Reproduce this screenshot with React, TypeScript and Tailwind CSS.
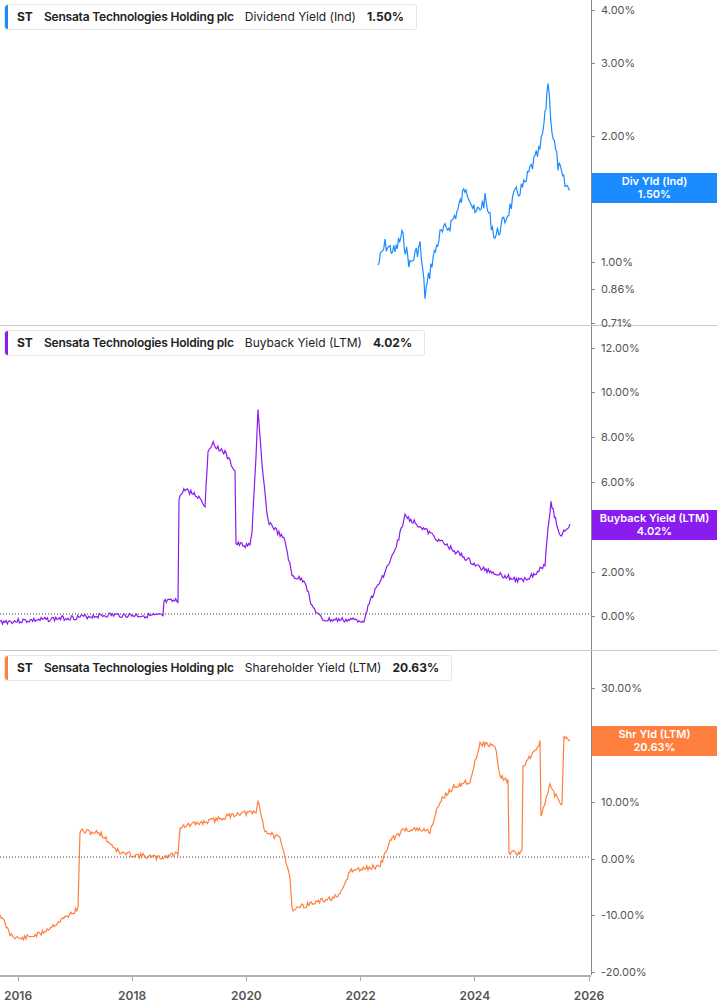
type P = [number, number];

const rnd = (seed: number) => {
  let s = seed;
  return () => {
    s = (s * 9301 + 49297) % 233280;
    return s / 233280;
  };
};

// densify a shape and add jitter
function wiggle(pts: P[], seed: number, amp: number, step = 1.2): string {
  const r = rnd(seed);
  const out: string[] = [];
  for (let i = 0; i < pts.length - 1; i++) {
    const [x1, y1] = pts[i];
    const [x2, y2] = pts[i + 1];
    const n = Math.max(1, Math.round((x2 - x1) / step));
    for (let k = 0; k < n; k++) {
      const t = k / n;
      const y = y1 + (y2 - y1) * t + (r() - 0.5) * amp * 2;
      out.push(`${(x1 + (x2 - x1) * t).toFixed(1)},${y.toFixed(1)}`);
    }
  }
  const last = pts[pts.length - 1];
  out.push(`${last[0]},${last[1]}`);
  return out.join(" ");
}

const divPts: P[] = [
  [378, 265], [385, 245], [395, 252], [402, 235], [410, 265], [420, 245], [425, 295],
  [432, 262], [440, 235], [450, 225], [458, 210], [466, 185], [475, 215], [485, 200],
  [495, 237], [505, 220], [515, 195], [525, 185], [530, 170], [540, 150], [545, 118],
  [548, 80], [552, 130], [558, 165], [565, 185], [570, 190],
];

const buyPts: P[] = [
  [0, 296], [40, 294], [80, 291], [110, 289], [163, 290], [164, 276], [178, 275], [179, 172],
  [185, 163], [200, 172], [205, 180], [208, 125], [212, 117], [225, 127], [235, 145],
  [236, 218], [250, 220], [252, 205], [256, 130], [258, 85], [262, 140], [268, 195],
  [285, 215], [292, 250], [305, 255], [312, 280], [322, 294], [365, 294], [368, 278],
  [380, 256], [395, 225], [405, 190], [420, 200], [440, 215], [465, 232], [480, 242],
  [505, 250], [520, 255], [535, 248], [545, 238], [548, 200], [551, 177], [560, 210],
  [570, 198],
];

const shrPts: P[] = [
  [0, 263], [10, 283], [20, 288], [40, 283], [60, 270], [78, 258], [80, 180], [100, 182],
  [120, 202], [160, 207], [178, 202], [180, 176], [210, 170], [240, 162], [256, 162],
  [258, 150], [265, 180], [280, 188], [290, 225], [292, 258], [310, 253], [340, 245],
  [350, 220], [380, 215], [390, 190], [405, 178], [430, 180], [440, 150], [455, 135],
  [470, 130], [480, 92], [495, 95], [500, 125], [508, 130], [509, 202], [522, 202],
  [523, 115], [540, 92], [541, 165], [550, 135], [562, 155], [564, 85], [570, 90],
];

type Tick = { label: string; y: number };

function Panel({
  name, value, color, pts, seed, amp, ticks, badge, badgeTop, zeroY, top,
}: {
  name: string; value: string; color: string; pts: P[]; seed: number; amp: number;
  ticks: Tick[]; badge: string; badgeTop: number; zeroY?: number; top?: boolean;
}) {
  return (
    <div className={`flex h-[325px] ${top ? "" : "border-t border-[#c8c8c8]"}`}>
      <div className="relative w-[591px] h-full">
        <svg width="591" height="325" className="absolute inset-0">
          {zeroY !== undefined && (
            <line x1="0" x2="591" y1={zeroY} y2={zeroY} stroke="#333" strokeWidth="1" strokeDasharray="1 2" />
          )}
          <polyline points={wiggle(pts, seed, amp)} fill="none" stroke={color} strokeWidth="1.2" />
        </svg>
        <div className="absolute left-[4px] top-[4px] flex items-center h-[26px] bg-white border border-[#e5e5e5] rounded-[3px] pr-3 text-[12px] text-[#222]">
          <div className="w-[3px] h-full rounded-l-[3px]" style={{ background: color }} />
          <span className="font-bold ml-[9px]">ST</span>
          <span className="font-semibold ml-[11px] tracking-[-0.2px]">Sensata Technologies Holding plc</span>
          <span className="ml-[11px]">{name}</span>
          <span className="font-bold ml-[11px]">{value}</span>
        </div>
      </div>
      <div className="relative flex-1 border-l border-[#888]">
        {ticks.map((t) => (
          <div key={t.label} className="absolute left-0 flex items-center text-[11px] text-[#555]" style={{ top: t.y - 7 }}>
            <span className="w-[3px] h-px bg-[#888]" />
            <span className="ml-[6px]">{t.label}</span>
          </div>
        ))}
        <div
          className="absolute left-0 right-0 h-[30px] flex flex-col items-center justify-center text-white text-[11px] font-semibold leading-[13px]"
          style={{ top: badgeTop, background: color }}
        >
          <span>{badge}</span>
          <span>{value}</span>
        </div>
      </div>
    </div>
  );
}

export default function App() {
  return (
    <div className="w-[717px] h-[1005px] bg-white overflow-hidden" style={{ fontFamily: "Inter, 'Liberation Sans', sans-serif" }}>
      <Panel top name="Dividend Yield (Ind)" value="1.50%" color="#1a8cff" pts={divPts} seed={7} amp={7} badge="Div Yld (Ind)" badgeTop={173}
        ticks={[{ label: "4.00%", y: 9 }, { label: "3.00%", y: 62 }, { label: "2.00%", y: 135 }, { label: "1.00%", y: 261 }, { label: "0.86%", y: 288 }, { label: "0.71%", y: 322 }]} />
      <Panel name="Buyback Yield (LTM)" value="4.02%" color="#8a1cf0" pts={buyPts} seed={3} amp={2.5} badge="Buyback Yield (LTM)" badgeTop={184} zeroY={288}
        ticks={[{ label: "12.00%", y: 21 }, { label: "10.00%", y: 65 }, { label: "8.00%", y: 110 }, { label: "6.00%", y: 155 }, { label: "2.00%", y: 245 }, { label: "0.00%", y: 289 }]} />
      <Panel name="Shareholder Yield (LTM)" value="20.63%" color="#ff7f3f" pts={shrPts} seed={11} amp={2.5} badge="Shr Yld (LTM)" badgeTop={75} zeroY={206}
        ticks={[{ label: "30.00%", y: 36 }, { label: "20.00%", y: 93 }, { label: "10.00%", y: 150 }, { label: "0.00%", y: 207 }, { label: "-10.00%", y: 263 }, { label: "-20.00%", y: 320 }]} />
      <div className="flex h-[30px] border-t-2 border-[#b0b0b0] w-[591px]">
        <div className="relative w-full text-[12px] font-semibold text-[#555]">
          {["2016", "2018", "2020", "2022", "2024", "2026"].map((y, i) => (
            <div key={y} className="absolute top-0 flex flex-col items-center" style={{ left: 18 + i * 114.2 - 20, width: 40 }}>
              <span className="w-px h-[4px] bg-[#aaa]" />
              <span className="mt-[6px]">{y}</span>
            </div>
          ))}
        </div>
      </div>
    </div>
  );
}
